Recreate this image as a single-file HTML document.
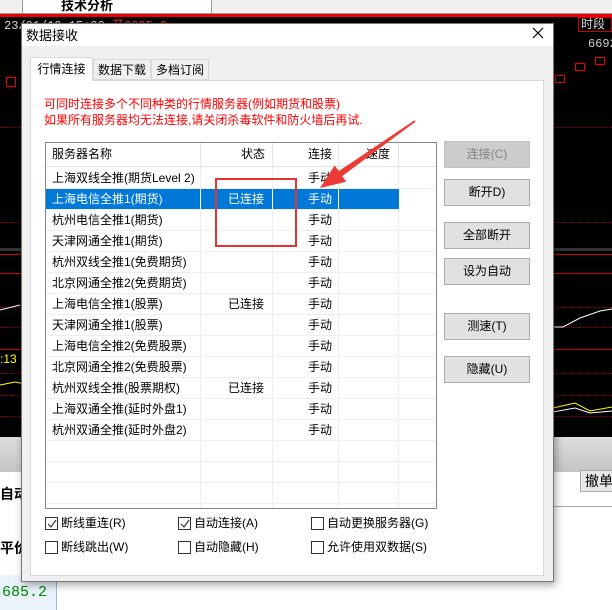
<!DOCTYPE html>
<html><head><meta charset="utf-8"><style>
*{margin:0;padding:0;box-sizing:border-box}
body{width:612px;height:610px;position:relative;overflow:hidden;background:#fff;font-family:"Liberation Sans","Noto Sans CJK SC",sans-serif;font-size:12px;color:#000}
.abs{position:absolute;white-space:nowrap}
.rl{position:absolute;height:1px;background:#c00}
.dl{position:absolute;height:0;border-top:1px dotted #900}
.row{position:absolute;left:0;width:390px;height:21px;border-bottom:1px solid #eee;line-height:20px;white-space:nowrap}
.row span{position:absolute;top:0}
.btn{position:absolute;left:444px;width:86px;height:27px;background:#e1e1e1;border:1px solid #adadad;text-align:center;line-height:25px;font-size:12px}
.cb{position:absolute;width:13px;height:13px;border:1px solid #333;background:#fff}
.cbt{position:absolute;font-size:12px;line-height:14px;white-space:nowrap}
</style></head><body>
<div class="abs" style="left:0;top:0;width:612px;height:14px;background:#f0f0f0;border-bottom:1px solid #999"></div>
<div class="abs" style="left:22px;top:-6px;width:190px;height:20px;background:#fff;border:1px solid #999;font-size:13px;padding-left:38px;font-weight:bold">技术分析</div>
<div class="abs" style="left:0;top:14px;width:612px;height:3px;background:#e00"></div>
<div class="abs" style="left:0;top:17px;width:612px;height:420px;background:#000"></div>
<div class="abs" style="left:4px;top:16px;font-family:'Liberation Mono','Noto Sans CJK SC',monospace;font-size:12px;color:#ddd">23/01/19 15:00 <span style="color:#f33">开6695.0</span></div>
<div class="abs" style="left:578px;top:17px;width:34px;height:15px;border:1px solid #c00;color:#ddd;font-size:12px;line-height:13px;padding-left:2px">时段</div>
<div class="abs" style="left:588px;top:37px;color:#ccc;font-family:'Liberation Mono',monospace">6692</div>
<div class="abs" style="left:555px;top:75px;width:10px;height:8px;border:1px solid #e00"></div>
<div class="abs" style="left:575px;top:63px;width:10px;height:8px;border:1px solid #e00"></div>
<div class="abs" style="left:595px;top:57px;width:10px;height:8px;border:1px solid #e00"></div>
<div class="abs" style="left:6px;top:77px;width:10px;height:10px;border:1px solid #e00"></div>
<div class="dl" style="left:0;top:127px;width:612px"></div>
<div class="dl" style="left:0;top:222px;width:612px"></div>
<div class="abs" style="left:0;top:248px;width:612px;height:3px;background:#333"></div>
<div class="rl" style="left:0;top:254px;width:612px"></div>
<div class="rl" style="left:0;top:273px;width:612px"></div>
<div class="dl" style="left:0;top:307px;width:612px"></div>
<div class="dl" style="left:0;top:327px;width:612px"></div>
<div class="rl" style="left:0;top:349px;width:612px"></div>
<div class="dl" style="left:0;top:373px;width:612px"></div>
<div class="dl" style="left:0;top:395px;width:612px"></div>
<div class="dl" style="left:0;top:416px;width:612px"></div>
<div class="abs" style="left:0;top:352px;color:#ff0;font-size:12px">:13</div>
<svg class="abs" style="left:0;top:0" width="612" height="440"><polyline points="0,310 20,305" stroke="#fff" fill="none"/><polyline points="0,385 15,382 30,385" stroke="#ff0" fill="none"/><polyline points="553,327 563,327 580,318 600,311 612,309" stroke="#fff" fill="none"/><polyline points="553,408 575,403 590,411 612,407" stroke="#ff0" fill="none"/><polyline points="553,412 575,408 590,413 612,411" stroke="#fff" fill="none"/></svg>
<div class="abs" style="left:0;top:437px;width:612px;height:35px;background:linear-gradient(#ddd,#c4c4c4)"></div>
<div class="abs" style="left:0;top:472px;width:612px;height:138px;background:#fff"></div>
<div class="abs" style="left:0;top:484px;font-size:14px;font-weight:bold">自动</div>
<div class="abs" style="left:0;top:538px;font-size:14px;font-weight:bold">平价</div>
<div class="abs" style="left:0;top:575px;width:57px;height:35px;background:#eaf3fb;border-right:1px solid #9bc"></div>
<div class="abs" style="left:2px;top:584px;color:#080;font-family:'Liberation Mono',monospace;font-size:15px">685.2</div>
<div class="abs" style="left:580px;top:470px;width:40px;height:22px;border:1px solid #aaa;background:#e8e8e8;font-size:14px;padding-left:4px;line-height:20px">撤单</div>
<div class="abs" style="left:553px;top:506px;width:59px;height:1px;background:#aaa"></div>
<!-- dialog -->
<div class="abs" style="left:21px;top:23px;width:533px;height:559px;background:#f0f0f0;border:1px solid #777;box-shadow:2px 3px 8px rgba(0,0,0,.35)"></div>
<div class="abs" style="left:22px;top:24px;width:531px;height:22px;background:#fff"></div>
<div class="abs" style="left:26px;top:25px;font-size:13px">数据接收</div>
<svg class="abs" style="left:532px;top:27px" width="12" height="12"><path d="M1 1L11 11M11 1L1 11" stroke="#000" stroke-width="1.2"/></svg>
<div class="abs" style="left:30px;top:80px;width:514px;height:496px;background:#fff;border:1px solid #d9d9d9"></div>
<div class="abs" style="left:30px;top:57px;width:63px;height:24px;background:#fff;border:1px solid #d9d9d9;border-bottom:none;text-align:center;line-height:22px">行情连接</div>
<div class="abs" style="left:93px;top:59px;width:58px;height:21px;background:#f0f0f0;border:1px solid #d9d9d9;text-align:center;line-height:20px">数据下载</div>
<div class="abs" style="left:151px;top:59px;width:58px;height:21px;background:#f0f0f0;border:1px solid #d9d9d9;text-align:center;line-height:20px">多档订阅</div>
<div class="abs" style="left:44px;top:96px;color:#f00;font-size:12px;line-height:16px">可同时连接多个不同种类的行情服务器(例如期货和股票)<br>如果所有服务器均无法连接,请关闭杀毒软件和防火墙后再试.</div>
<div class="abs" style="left:45px;top:142px;width:392px;height:367px;border:1px solid #828790;background:#fff;overflow:hidden">
 <div class="abs" style="left:0;top:0;width:390px;height:24px;border-bottom:1px solid #e5e5e5;line-height:23px">
  <span class="abs" style="left:6px">服务器名称</span><span class="abs" style="left:154px;width:1px;height:24px;background:#e5e5e5"></span>
  <span class="abs" style="left:195px">状态</span><span class="abs" style="left:226px;width:1px;height:24px;background:#e5e5e5"></span>
  <span class="abs" style="left:262px">连接</span><span class="abs" style="left:292px;width:1px;height:24px;background:#e5e5e5"></span>
  <span class="abs" style="left:320px">速度</span><span class="abs" style="left:352px;width:1px;height:24px;background:#e5e5e5"></span>
 </div>
 <div class="abs" style="left:154px;top:24px;width:1px;height:343px;background:#eee"></div>
 <div class="abs" style="left:226px;top:24px;width:1px;height:343px;background:#eee"></div>
 <div class="abs" style="left:292px;top:24px;width:1px;height:343px;background:#eee"></div>
 <div class="abs" style="left:352px;top:24px;width:1px;height:343px;background:#eee"></div>
 <div class="row" style="top:25px"><span style="left:6px">上海双线全推(期货Level 2)</span><span style="left:262px">手动</span></div>
 <div class="row" style="top:46px;background:#0078d7;color:#fff;width:353px"><span style="left:6px">上海电信全推1(期货)</span><span style="left:182px">已连接</span><span style="left:262px">手动</span><span style="left:154px;width:1px;height:20px;background:#fff"></span><span style="left:226px;width:1px;height:20px;background:#fff"></span><span style="left:292px;width:1px;height:20px;background:#fff"></span></div>
 <div class="row" style="top:67px"><span style="left:6px">杭州电信全推1(期货)</span><span style="left:262px">手动</span></div>
 <div class="row" style="top:88px"><span style="left:6px">天津网通全推1(期货)</span><span style="left:262px">手动</span></div>
 <div class="row" style="top:109px"><span style="left:6px">杭州双线全推1(免费期货)</span><span style="left:262px">手动</span></div>
 <div class="row" style="top:130px"><span style="left:6px">北京网通全推2(免费期货)</span><span style="left:262px">手动</span></div>
 <div class="row" style="top:151px"><span style="left:6px">上海电信全推1(股票)</span><span style="left:182px">已连接</span><span style="left:262px">手动</span></div>
 <div class="row" style="top:172px"><span style="left:6px">天津网通全推1(股票)</span><span style="left:262px">手动</span></div>
 <div class="row" style="top:193px"><span style="left:6px">上海电信全推2(免费股票)</span><span style="left:262px">手动</span></div>
 <div class="row" style="top:214px"><span style="left:6px">北京网通全推2(免费股票)</span><span style="left:262px">手动</span></div>
 <div class="row" style="top:235px"><span style="left:6px">杭州双线全推(股票期权)</span><span style="left:182px">已连接</span><span style="left:262px">手动</span></div>
 <div class="row" style="top:256px"><span style="left:6px">上海双通全推(延时外盘1)</span><span style="left:262px">手动</span></div>
 <div class="row" style="top:277px"><span style="left:6px">杭州双通全推(延时外盘2)</span><span style="left:262px">手动</span></div>
 <div class="row" style="top:298px"></div>
 <div class="row" style="top:319px"></div>
 <div class="row" style="top:340px"></div>
</div>
<div class="btn" style="top:141px;background:#ccc;border-color:#bfbfbf;color:#838383">连接(C)</div>
<div class="btn" style="top:179px">断开D)</div>
<div class="btn" style="top:222px">全部断开</div>
<div class="btn" style="top:258px">设为自动</div>
<div class="btn" style="top:313px">测速(T)</div>
<div class="btn" style="top:356px">隐藏(U)</div>
<div class="cb" style="left:45px;top:517px"></div><svg class="abs" style="left:47px;top:519px" width="10" height="10"><path d="M1 5L4 8L9 1" stroke="#333" fill="none" stroke-width="1.2"/></svg><div class="cbt" style="left:61px;top:516px">断线重连(R)</div>
<div class="cb" style="left:178px;top:517px"></div><svg class="abs" style="left:180px;top:519px" width="10" height="10"><path d="M1 5L4 8L9 1" stroke="#333" fill="none" stroke-width="1.2"/></svg><div class="cbt" style="left:194px;top:516px">自动连接(A)</div>
<div class="cb" style="left:311px;top:517px"></div><div class="cbt" style="left:327px;top:516px">自动更换服务器(G)</div>
<div class="cb" style="left:45px;top:541px"></div><div class="cbt" style="left:61px;top:540px">断线跳出(W)</div>
<div class="cb" style="left:178px;top:541px"></div><div class="cbt" style="left:194px;top:540px">自动隐藏(H)</div>
<div class="cb" style="left:311px;top:541px"></div><div class="cbt" style="left:327px;top:540px">允许使用双数据(S)</div>
<div class="abs" style="left:215px;top:178px;width:82px;height:69px;border:2px solid #e8312f"></div>
<svg class="abs" style="left:0;top:0" width="612" height="610"><polygon points="414.5,120.3 415.5,121.7 342.2,176.1 346.3,181.8 320,188 334.7,165.4 338.8,171.1" fill="#ee3a36"/></svg>
</body></html>
